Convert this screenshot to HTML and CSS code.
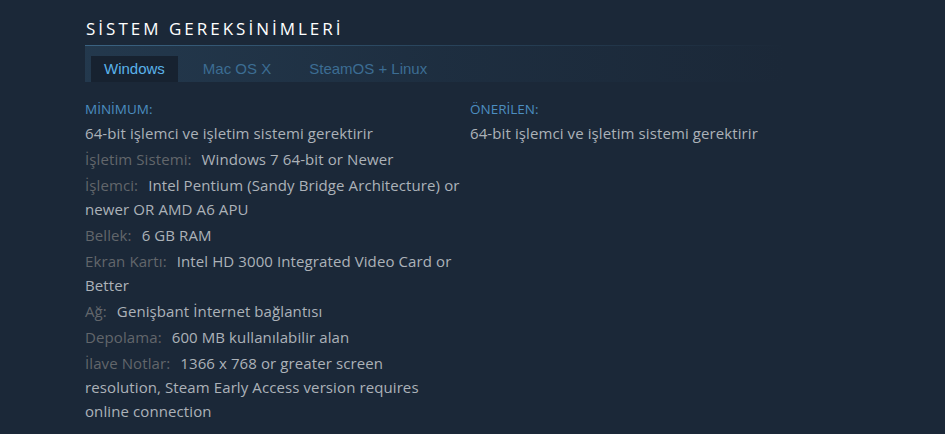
FILE: index.html
```html
<!DOCTYPE html>
<html lang="tr">
<head>
  <meta charset="UTF-8">
  <title>Sistem Gereksinimleri</title>
  <link rel="stylesheet" href="styles.css">
</head>
<body>
  <section class="sysreq">
    <h2 class="sysreq-title">Sistem Gereksinimleri</h2>
    <div class="tabs">
      <span class="tab active">Windows</span>
      <span class="tab">Mac OS X</span>
      <span class="tab">SteamOS + Linux</span>
    </div>
    <div class="cols">
      <div class="col left">
        <ul class="reqs">
          <li class="head">MİNİMUM:</li>
          <li>64-bit işlemci ve işletim sistemi gerektirir</li>
          <li><span class="lbl">İşletim Sistemi:</span> Windows 7 64-bit or Newer</li>
          <li><span class="lbl">İşlemci:</span> Intel Pentium (Sandy Bridge Architecture) or newer OR AMD A6 APU</li>
          <li><span class="lbl">Bellek:</span> 6 GB RAM</li>
          <li><span class="lbl">Ekran Kartı:</span> Intel HD 3000 Integrated Video Card or Better</li>
          <li><span class="lbl">Ağ:</span> Genişbant İnternet bağlantısı</li>
          <li><span class="lbl">Depolama:</span> 600 MB kullanılabilir alan</li>
          <li><span class="lbl">İlave Notlar:</span> 1366 x 768 or greater screen resolution, Steam Early Access version requires online connection</li>
        </ul>
      </div>
      <div class="col right">
        <ul class="reqs">
          <li class="head">ÖNERİLEN:</li>
          <li>64-bit işlemci ve işletim sistemi gerektirir</li>
        </ul>
      </div>
    </div>
  </section>
</body>
</html>
```

FILE: styles.css
```css
*{box-sizing:border-box;margin:0;padding:0;}
html,body{height:100%;}
body{
  background:#1b2838;
  font-family:'Open Sans','Noto Sans',sans-serif;
  color:#acb2b8;
  overflow:hidden;
}
.sysreq{width:700px;margin-left:85px;padding-top:16px;}
.sysreq-title{
  font-size:17px;
  font-weight:400;
  text-transform:uppercase;
  letter-spacing:3px;
  color:#fff;
  line-height:26px;
  padding-left:1px;
  padding-bottom:3px;
  border-bottom:1px solid transparent;
  border-image:linear-gradient(to right,#3b6382 0%,#2c4a63 40%,rgba(27,40,56,0) 100%) 1;
}

/* ------- TABS ------- */
.tabs{
  display:flex;
  gap:12px;
  padding:10px 6px 0;
  height:36px;
  background:linear-gradient(to right,rgba(38,62,84,.75) 0%,rgba(32,52,72,.5) 50%,rgba(27,40,56,0) 100%);
}
.tab{
  font-family:'Liberation Sans',Arial,sans-serif;
  font-size:15px;
  line-height:24px;
  padding:1px 13px 0;
  color:#3c6d93;
}
.tab.active{background:#172230;color:#5ab2ea;}

/* ------- COLUMNS ------- */
.cols{display:flex;padding-top:15px;}
.col.left{width:385px;padding-right:10px;}
.col.right{flex:1;}
.reqs{list-style:none;font-size:15px;line-height:24px;letter-spacing:.1px;}
.reqs li{margin-bottom:2px;}
.reqs li.head{color:#4c8ec0;font-size:13.5px;margin-bottom:0;letter-spacing:0;}
.lbl{color:#62666b;margin-right:6px;}
```
